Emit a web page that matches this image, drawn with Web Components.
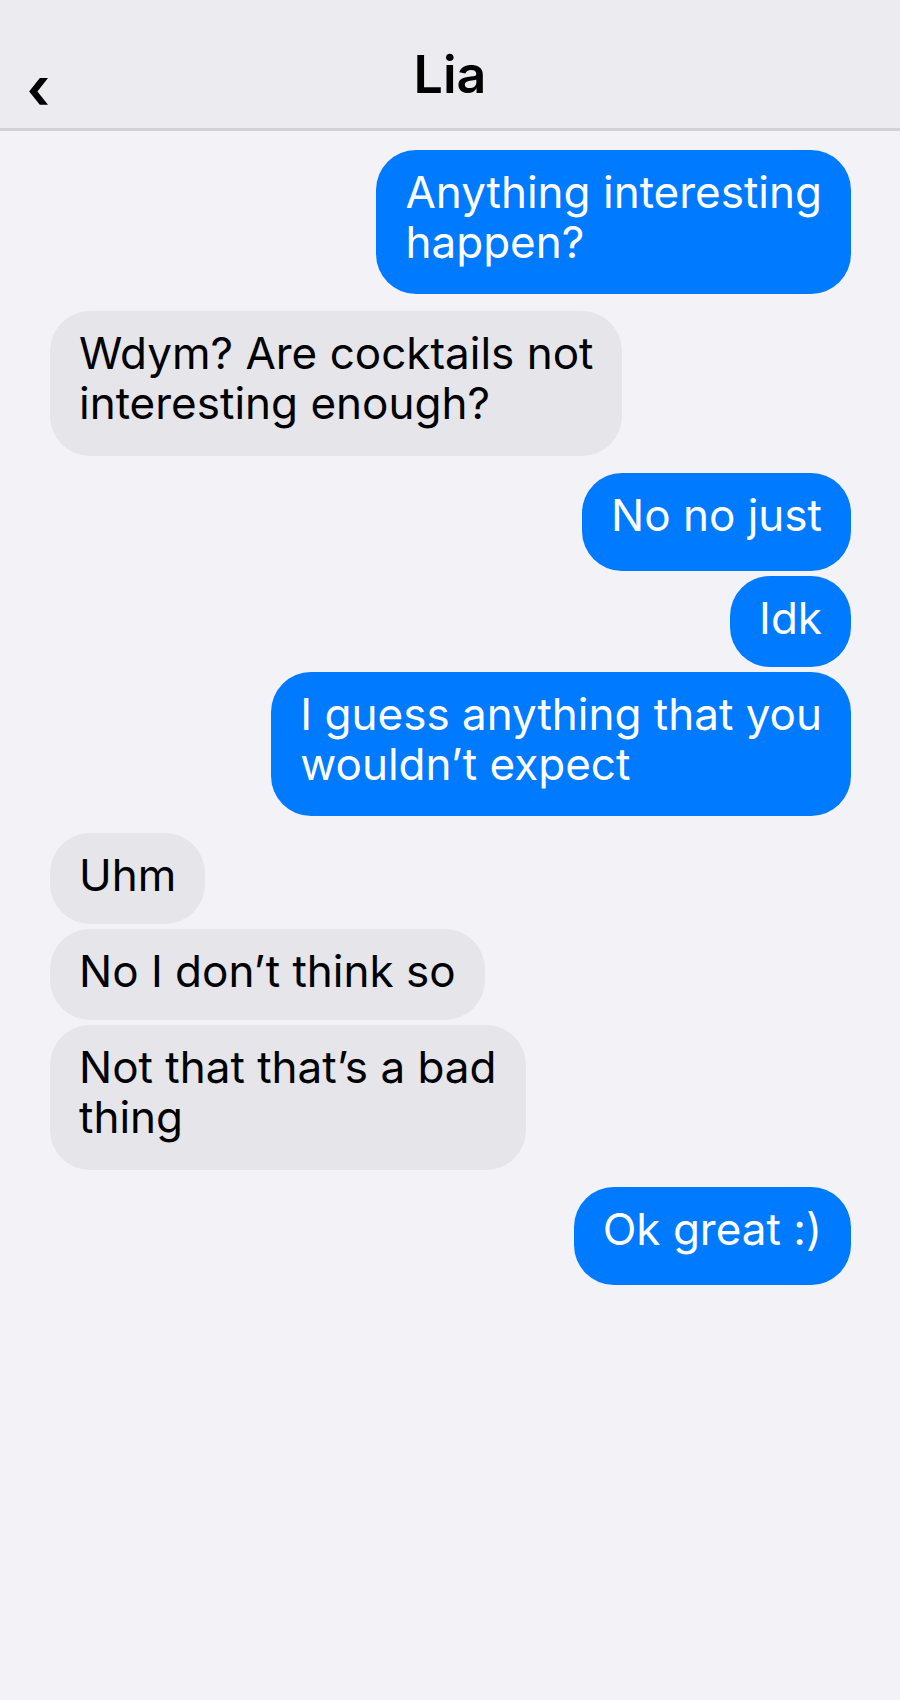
<!DOCTYPE html>
<html lang="en">
<head>
<meta charset="utf-8">
<meta name="viewport" content="width=device-width, initial-scale=1">
<title>Lia</title>
<style>
  body{margin:0;min-height:100vh;background:#f2f2f7;color:#000;font-family:Inter,"Liberation Sans",sans-serif}
</style>
</head>
<body>
<chat-screen>
  <chat-header slot="header">Lia</chat-header>
  <chat-group side="out">
    <chat-bubble size="double">Anything interesting<br>happen?</chat-bubble>
  </chat-group>
  <chat-group side="in">
    <chat-bubble size="double">Wdym? Are cocktails not<br>interesting enough?</chat-bubble>
  </chat-group>
  <chat-group side="out">
    <chat-bubble size="tall">No no just</chat-bubble>
    <chat-bubble>Idk</chat-bubble>
    <chat-bubble size="double">I guess anything that you<br>wouldn’t expect</chat-bubble>
  </chat-group>
  <chat-group side="in">
    <chat-bubble>Uhm</chat-bubble>
    <chat-bubble>No I don’t think so</chat-bubble>
    <chat-bubble size="double">Not that that’s a bad<br>thing</chat-bubble>
  </chat-group>
  <chat-group side="out">
    <chat-bubble size="tall">Ok great :)</chat-bubble>
  </chat-group>
</chat-screen>

<script>
class ChatScreen extends HTMLElement {
  constructor(){
    super();
    const s=this.attachShadow({mode:'open'});
    s.innerHTML=`
      <style>
        :host{display:flex;flex-direction:column;min-height:100vh}
        main{display:flex;flex-direction:column;gap:17px;padding:19px 49px 19px 50px}
      </style>
      <slot name="header"></slot>
      <main><slot></slot></main>`;
  }
}

class ChatHeader extends HTMLElement {
  constructor(){
    super();
    const s=this.attachShadow({mode:'open'});
    s.innerHTML=`
      <style>
        :host{display:grid;grid-template-columns:1fr auto 1fr;align-items:end;padding:43px 28px 21px;background:#ebebf0;border-bottom:3px solid #d1d1d6}
        h1{margin:0;font-size:52px;line-height:64px;font-weight:600}
        button{justify-self:start;display:block;padding:0;border:0;background:none;color:inherit;cursor:pointer}
        svg{display:block;width:20px;height:34px;fill:currentColor}
      </style>
      <button type="button" aria-label="Back"><svg viewBox="0 0 20 34" aria-hidden="true"><path d="M1.200 18.500 11.800 5H20L9.400 18.500 20 31.700h-8.200z"/></svg></button>
      <h1><slot></slot></h1>`;
  }
}

class ChatGroup extends HTMLElement {
  constructor(){
    super();
    const s=this.attachShadow({mode:'open'});
    s.innerHTML=`
      <style>
        :host{display:flex;flex-direction:column;align-items:flex-start;gap:5px;--bubble:#e5e5ea;--ink:#000;--double-pad:28px}
        :host([side="out"]){align-items:flex-end;--bubble:#007aff;--ink:#fff;--double-pad:27px}
      </style>
      <slot></slot>`;
  }
}

class ChatBubble extends HTMLElement {
  constructor(){
    super();
    const s=this.attachShadow({mode:'open'});
    s.innerHTML=`
      <style>
        :host{display:block;padding:17px 29px 24px;border-radius:40px;background:var(--bubble);color:var(--ink);font-size:44px;line-height:50px}
        :host([size="tall"]){padding-bottom:31px}
        :host([size="double"]){padding-bottom:var(--double-pad)}
      </style>
      <slot></slot>`;
  }
}

customElements.define('chat-screen', ChatScreen);
customElements.define('chat-header', ChatHeader);
customElements.define('chat-group', ChatGroup);
customElements.define('chat-bubble', ChatBubble);
</script>
</body>
</html>
